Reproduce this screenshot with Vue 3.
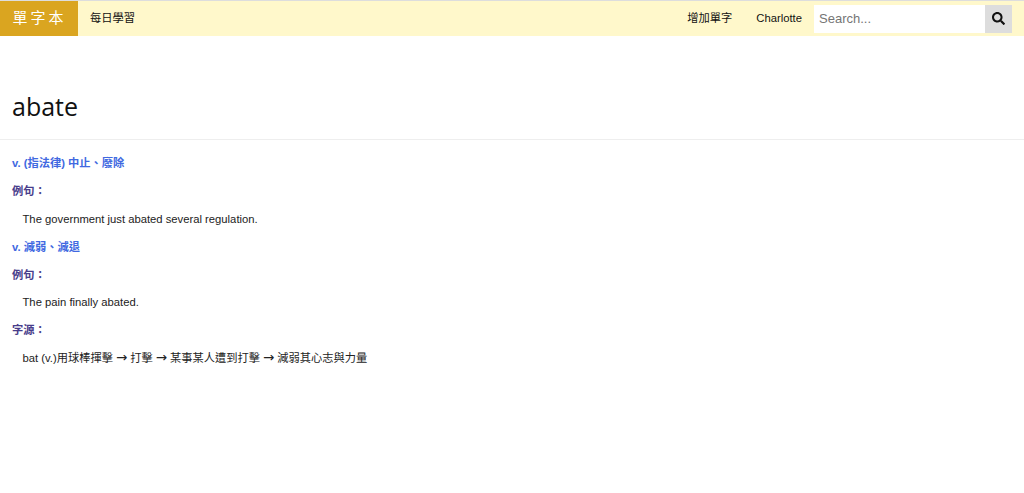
<script setup>
const entries = [
  { pos: 'v. (指法律) 中止、廢除', ex: 'The government just abated several regulation.' },
  { pos: 'v. 減弱、減退', ex: 'The pain finally abated.' },
]
const steps = ['打擊', '某事某人遭到打擊', '減弱其心志與力量']
</script>

<template>
  <div class="page">
    <nav class="nav">
      <a class="brand">單字本</a>
      <a class="link first">每日學習</a>
      <div class="spacer"></div>
      <a class="link">增加單字</a>
      <a class="link">Charlotte</a>
      <form class="search" @submit.prevent>
        <input class="input" placeholder="Search..." />
        <button class="btn" aria-label="search">
          <svg width="13" height="13" viewBox="0 0 512 512"><path fill="#111" d="M505 442.700L405.300 343c-4.500-4.500-10.600-7-17-7H372c27.600-35.300 44-79.700 44-128C416 93.100 322.900 0 208 0S0 93.100 0 208s93.100 208 208 208c48.300 0 92.700-16.400 128-44v16.300c0 6.400 2.500 12.500 7 17l99.700 99.700c9.400 9.400 24.600 9.400 33.900 0l28.300-28.300c9.400-9.400 9.400-24.600.1-34zM208 336c-70.700 0-128-57.200-128-128 0-70.700 57.200-128 128-128 70.700 0 128 57.200 128 128 0 70.700-57.200 128-128 128z"/></svg>
        </button>
      </form>
    </nav>
    <header class="head"><h1 class="word">abate</h1></header>
    <main class="body">
      <template v-for="e in entries" :key="e.pos">
        <p class="pos">{{ e.pos }}</p>
        <p class="label">例句：</p>
        <p class="text">{{ e.ex }}</p>
      </template>
      <p class="label">字源：</p>
      <p class="text">bat (v.)用球棒揮擊<template v-for="s in steps" :key="s"><span class="arrow">→</span>{{ s }}</template></p>
    </main>
  </div>
</template>

<style>
html, body { margin: 0; background: #fff; }
</style>

<style scoped>
.page {
  font-family: "Liberation Sans", "Noto Sans CJK TC", sans-serif;
  font-size: 11.25px;
  line-height: 16.8px;
  color: #222;
  border-top: 1px solid #ddd;
}
.nav {
  display: flex;
  align-items: center;
  height: 35px;
  background: #fff8cb;
}
.brand {
  display: flex;
  align-items: center;
  justify-content: center;
  box-sizing: border-box;
  width: 78px;
  height: 100%;
  background: #daa520;
  color: #fff;
  font-family: "Liberation Serif", "Noto Sans CJK TC", serif;
  font-size: 15px;
  letter-spacing: 3px;
  padding-left: 1px;
}
.link { padding: 0 12px; color: #111; }
.spacer { flex: 1; }
.search { display: flex; height: 28px; margin-right: 12px; }
.input {
  box-sizing: border-box;
  width: 171px;
  height: 28px;
  padding: 0 5px;
  border: 0;
  outline: 0;
  background: #fff;
  font-family: inherit;
  font-size: 13px;
}
.input::placeholder { color: #757575; }
.btn {
  display: flex;
  align-items: center;
  justify-content: center;
  width: 27px;
  height: 28px;
  padding: 0;
  border: 0;
  background: #ddd;
}
.head { height: 104px; box-sizing: border-box; border-bottom: 1px solid #eee; padding: 54px 12px 0; }
.word {
  margin: 0;
  font-family: "Open Sans", sans-serif;
  font-size: 25px;
  line-height: 32px;
  font-weight: 400;
  color: #111;
}
.body { padding: 15.4px 12px 0; }
.body p { margin: 0 0 11px; }
.pos { font-weight: 700; color: #4169e1; }
.label { font-weight: 700; color: #483d8b; }
.body .text { padding-left: 10.5px; }
.arrow { font-family: "DejaVu Sans", sans-serif; font-size: 13.4px; line-height: 1; margin: 0 3px; }
</style>
